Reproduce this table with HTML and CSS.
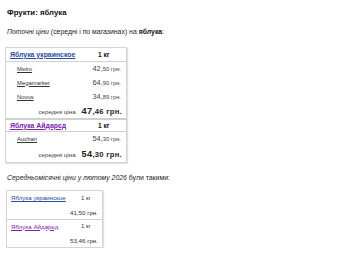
FILE: index.html
```html
<!DOCTYPE html>
<html>
<head>
<meta charset="utf-8">
<link rel="stylesheet" href="styles.css">
</head>
<body>
<div class="page">
  <h1 class="title">Фрукти: яблука</h1>
  <p class="intro"><i>Поточні ціни</i> (середні і по магазинах) на <b>яблука</b>:</p>

  <table class="prices">
    <tr class="group">
      <td><a href="#" class="link">Яблука украинское</a></td>
      <td class="unit">1 кг</td>
    </tr>
    <tr class="shop">
      <td><a href="#" class="shop-link">Metro</a></td>
      <td class="price"><span class="big">42,</span><span class="small">50 грн.</span></td>
    </tr>
    <tr class="shop">
      <td><a href="#" class="shop-link">Megamarket</a></td>
      <td class="price"><span class="big">64,</span><span class="small">90 грн.</span></td>
    </tr>
    <tr class="shop">
      <td><a href="#" class="shop-link">Novus</a></td>
      <td class="price"><span class="big">34,</span><span class="small">89 грн.</span></td>
    </tr>
    <tr class="avg">
      <td class="avg-label">середня ціна</td>
      <td class="avg-price"><span class="abig">47</span>,46 грн.</td>
    </tr>
    <tr class="group sep">
      <td><a href="#" class="link visited">Яблука Айдарєд</a></td>
      <td class="unit">1 кг</td>
    </tr>
    <tr class="shop">
      <td><a href="#" class="shop-link">Auchan</a></td>
      <td class="price"><span class="big">54,</span><span class="small">30 грн.</span></td>
    </tr>
    <tr class="avg last">
      <td class="avg-label">середня ціна</td>
      <td class="avg-price"><span class="abig">54</span>,30 грн.</td>
    </tr>
  </table>

  <p class="intro second"><i>Середньомісячні ціни у лютому 2026</i> були такими:</p>

  <table class="monthly">
    <tr class="m-name">
      <td><a href="#" class="m-link">Яблука украинское</a></td>
      <td class="m-unit">1 кг</td>
    </tr>
    <tr class="m-price">
      <td></td>
      <td class="m-val">41,50 грн.</td>
    </tr>
    <tr class="m-name m-sep">
      <td><a href="#" class="m-link visited">Яблука Айдарєд</a></td>
      <td class="m-unit">1 кг</td>
    </tr>
    <tr class="m-price">
      <td></td>
      <td class="m-val">53,46 грн.</td>
    </tr>
  </table>
</div>
</body>
</html>
```

FILE: styles.css
```css
html, body {
  margin: 0;
  padding: 0;
  background: #fff;
}
body {
  font-family: "Liberation Sans", Arial, sans-serif;
  color: #222;
}
.page {
  padding: 6px 5px 0 7px;
}
.title {
  font-size: 7.8px;
  font-weight: bold;
  margin: 0;
  line-height: 13px;
  color: #111;
  white-space: nowrap;
}
.intro {
  font-size: 6.9px;
  margin: 7px 0 0 0;
  line-height: 12px;
  color: #222;
  white-space: nowrap;
}
.intro b { color: #111; }
.prices {
  margin: 9px 0 0 -2px;
  border-collapse: collapse;
  border: 1px solid #d4d4d4;
  box-shadow: 1px 1px 1px #e2e2e2;
  width: 122px;
  font-size: 6px;
  line-height: 9px;
}
.prices td {
  padding: 0;
  height: 14px;
  vertical-align: middle;
  white-space: nowrap;
}
.group td {
  height: 13px;
  border-bottom: 1px solid #d0d0d0;
}
.group td:first-child { padding-left: 4px; }
.group.sep td {
  border-top: 2px solid #d0d0d0;
  height: 11px;
}
.link {
  font-size: 6.9px;
  font-weight: bold;
  color: #2a4aa0;
  text-decoration: underline;
}
.link.visited { color: #7d22a8; }
.unit {
  font-size: 6.7px;
  font-weight: bold;
  text-align: center;
  width: 44px;
  color: #111;
}
.shop td:first-child { padding-left: 11px; }
.shop-link {
  font-size: 5.9px;
  color: #333;
  text-decoration: underline;
}
.price {
  text-align: right;
  padding-right: 5px !important;
  color: #444;
}
.price .big { font-size: 7.4px; }
.price .small { font-size: 5.8px; }
.avg td { height: 14px; }
.avg.last td { height: 16px; }
.avg-label {
  font-size: 6.2px;
  color: #444;
  text-align: right;
  padding-right: 6px !important;
}
.avg-price {
  font-size: 7.6px;
  font-weight: bold;
  color: #222;
  text-align: right;
  padding-right: 4px !important;
  letter-spacing: 0.3px;
}
.avg-price .abig { font-size: 9.2px; }
.second {
  margin-top: 9px;
}
.monthly {
  margin: 6px 0 0 -1px;
  border-collapse: collapse;
  border: 1px solid #d4d4d4;
  box-shadow: 1px 1px 1px #e2e2e2;
  width: 97px;
  font-size: 6px;
  line-height: 9px;
}
.monthly td {
  padding: 0;
  height: 14px;
  vertical-align: middle;
  font-size: 6px;
  white-space: nowrap;
}
.m-name td:first-child { padding-left: 4px; }
.m-sep td { border-top: 1px solid #d0d0d0; height: 13px; }
.m-link {
  color: #2a4aa0;
  text-decoration: underline;
  font-size: 6.2px;
}
.m-link.visited { color: #7d22a8; }
.m-unit {
  text-align: center;
  color: #333;
  width: 32px;
}
.m-val {
  text-align: right;
  padding-right: 4px !important;
  color: #333;
  font-size: 6.2px !important;
}
```
